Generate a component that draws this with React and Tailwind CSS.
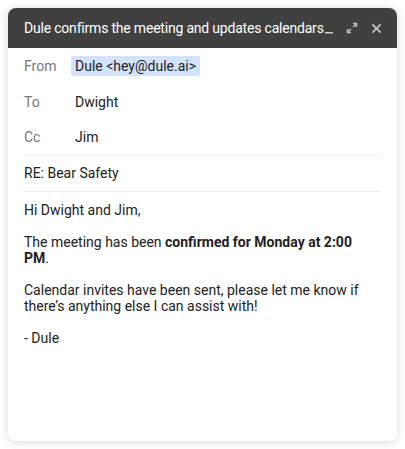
import React from "react";

export default function App() {
  return (
    <div className="w-[405px] h-[449px] bg-white p-2" style={{ fontFamily: "Roboto, 'Liberation Sans', sans-serif" }}>
      <div className="w-[389px] h-[433px] rounded-lg bg-white shadow-[0_1px_8px_rgba(0,0,0,0.16)] flex flex-col overflow-hidden">
        <div className="h-10 bg-[#404040] flex items-center pl-4 pr-[15px] shrink-0">
          <div className="flex-1 min-w-0 text-[14px] font-normal text-white whitespace-nowrap tracking-[-0.2px]">
            Dule confirms the meeting and updates calendars
          </div>
          <div className="flex items-center">
            <svg width="8" height="12" viewBox="0 0 8 12" className="relative">
              <rect x="0" y="10" width="8" height="1.5" fill="#d0d0d0" />
            </svg>
            <svg width="12" height="12" viewBox="0 0 12 12" fill="none" stroke="#bdbdbd" strokeWidth="1.4" className="ml-[13px]">
              <path d="M7 1.5h3.5V5M10.5 1.5L7 5M5 10.5H1.5V7M1.5 10.5L5 7" />
            </svg>
            <svg width="11" height="11" viewBox="0 0 12 12" fill="none" stroke="#c4c4c4" strokeWidth="2" className="ml-[13px]">
              <path d="M1.5 1.5l9 9M10.5 1.5l-9 9" />
            </svg>
          </div>
        </div>
        <div className="px-4 flex flex-col text-[14px] text-[#222]">
          <div className="h-9 flex items-center">
            <span className="w-[47px] text-[#777]">From</span>
            <span className="bg-[#d3e3fd] rounded-[3px] px-1 h-5 flex items-center">Dule &lt;hey@dule.ai&gt;</span>
          </div>
          <div className="h-9 flex items-center">
            <span className="w-[51px] text-[#777]">To</span>
            <span>Dwight</span>
          </div>
          <div className="h-9 flex items-center border-b border-[#eeeeee]">
            <span className="w-[51px] text-[#777]">Cc</span>
            <span>Jim</span>
          </div>
          <div className="h-9 flex items-center border-b border-[#eeeeee]">RE: Bear Safety</div>
          <div className="pt-[10px] pr-3 leading-4 flex flex-col gap-4">
            <p>Hi Dwight and Jim,</p>
            <p>
              The meeting has been <b className="font-bold">confirmed for Monday at 2:00 PM</b>.
            </p>
            <p>Calendar invites have been sent, please let me know if there’s anything else I can assist with!</p>
            <p>- Dule</p>
          </div>
        </div>
      </div>
    </div>
  );
}
